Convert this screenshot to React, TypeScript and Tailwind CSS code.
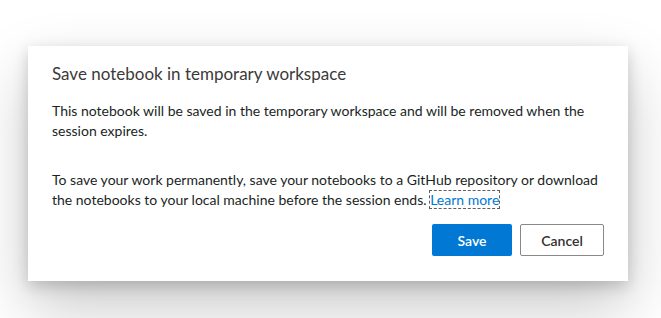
export default function App() {
  return (
    <div
      className="h-[318px] w-[661px] bg-white pt-[46px] pl-[28px]"
      style={{ fontFamily: 'Lato, "Noto Sans", sans-serif' }}
    >
      <div className="w-[600px] bg-white px-6 pt-4 pb-[25px] text-[#201f1e] shadow-[0_25.6px_57.6px_rgba(0,0,0,0.22),0_4.8px_14.4px_rgba(0,0,0,0.18)]">
        <h1 className="text-[17px] leading-6 font-normal text-[#3b3a39]">
          Save notebook in temporary workspace
        </h1>
        <p className="mt-[15px] text-[14px] leading-5">
          This notebook will be saved in the temporary workspace and will be
          removed when the session expires.
        </p>
        <p className="mt-[29px] text-[14px] leading-5">
          To save your work permanently, save your notebooks to a GitHub
          repository or download the notebooks to your local machine before the
          session ends.{" "}
          <a
            href="#"
            className="outline outline-1 outline-dashed outline-[#605e5c] text-[#0078d4]"
          >
            Learn more
          </a>
        </p>
        <div className="mt-[14px] flex justify-end gap-2">
          <button className="h-8 w-20 rounded-[2px] bg-[#0078d4] text-[14px] font-semibold text-white">
            Save
          </button>
          <button className="h-8 w-[84px] rounded-[2px] border border-[#8a8886] bg-white text-[14px] font-semibold text-[#323130]">
            Cancel
          </button>
        </div>
      </div>
    </div>
  );
}
